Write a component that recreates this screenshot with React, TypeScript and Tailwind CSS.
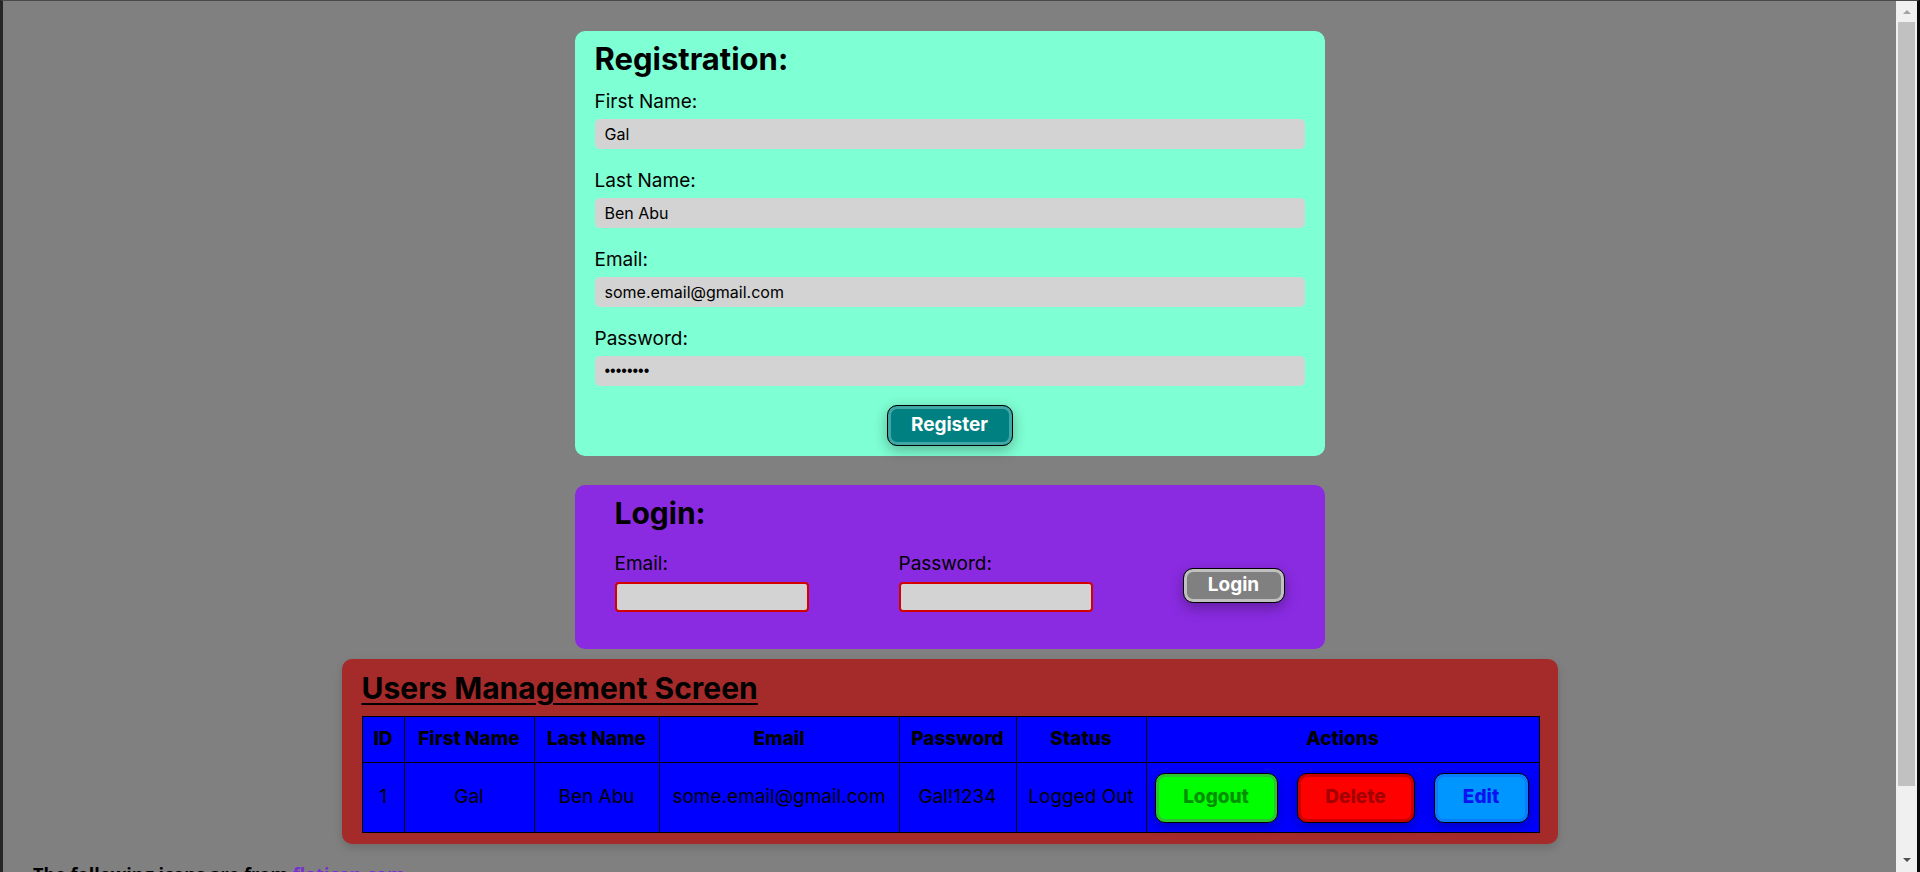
import { ChangeEvent, useState } from "react";

type User = {
  id: number;
  firstName: string;
  lastName: string;
  email: string;
  password: string;
  status: string;
};

const usersData: User[] = [
  {
    id: 1,
    firstName: "Gal",
    lastName: "Ben Abu",
    email: "some.email@gmail.com",
    password: "Gal!1234",
    status: "Logged Out",
  },
];

// column widths taken from the table in the screen
const columns = [
  { title: "ID", width: "w-[42px]" },
  { title: "First Name", width: "w-[130px]" },
  { title: "Last Name", width: "w-[125px]" },
  { title: "Email", width: "w-[240px]" },
  { title: "Password", width: "w-[117px]" },
  { title: "Status", width: "w-[130px]" },
  { title: "Actions", width: "w-[393px]" },
];

function Scrollbar() {
  return (
    <div className="flex w-[21px] shrink-0 flex-col bg-[#f0f0f0]">
      <div className="flex h-[21px] w-full items-center justify-center">
        <div className="h-0 w-0 border-x-[4px] border-b-[4px] border-x-transparent border-b-[#a3a3a3]" />
      </div>
      <div className="mx-[2px] h-[764px] bg-[#c1c1c1]" />
      <div className="flex-1" />
      <div className="flex h-[24px] w-full items-center justify-center">
        <div className="h-0 w-0 border-x-[4px] border-t-[4px] border-x-transparent border-t-[#505050]" />
      </div>
    </div>
  );
}

function App() {
  const [form, setForm] = useState({
    firstName: "Gal",
    lastName: "Ben Abu",
    email: "some.email@gmail.com",
    password: "Gal!1234",
  });
  const [loginEmail, setLoginEmail] = useState("");
  const [loginPassword, setLoginPassword] = useState("");

  const handdleChange = (e: ChangeEvent<HTMLInputElement>) => {
    setForm({ ...form, [e.target.name]: e.target.value });
  };

  const fields = [
    { name: "firstName", label: "First Name:", type: "text" },
    { name: "lastName", label: "Last Name:", type: "text" },
    { name: "email", label: "Email:", type: "text" },
    { name: "password", label: "Password:", type: "password" },
  ] as const;

  return (
    <div className="flex h-[872px] w-full overflow-hidden border-t border-l-[3px] border-r-[3px] border-t-[#4a4a4a] border-l-[#262626] border-r-[#0a0a0a] bg-[#808080]">
      <main className="flex flex-1 flex-col items-center pt-[30px] font-['Inter',sans-serif] text-black">
        {/* registration */}
        <div className="flex w-[750px] shrink-0 flex-col rounded-[10px] bg-[#7fffd4] px-[20px] pt-[10px] pb-[10px]">
          <h2 className="mb-[13px] text-[31px] leading-[36px] font-bold">Registration:</h2>
          {fields.map((field, i) => (
            <div key={field.name} className={i > 0 ? "mt-[20px] flex flex-col" : "flex flex-col"}>
              <label htmlFor={field.name} className="text-[19px] leading-[24px]">
                {field.label}
              </label>
              <input
                id={field.name}
                name={field.name}
                type={field.type}
                value={form[field.name]}
                onChange={handdleChange}
                className={
                  field.type === "password"
                    ? "mt-[5px] h-[30px] rounded-[5px] bg-[#d3d3d3] px-[10px] font-['Liberation_Sans',sans-serif] text-[16px] outline-none"
                    : "mt-[5px] h-[30px] rounded-[5px] bg-[#d3d3d3] px-[10px] text-[16px] outline-none"
                }
              />
            </div>
          ))}
          <button className="mt-[19px] h-[41px] w-[126px] self-center rounded-[10px] border border-black bg-[#008080] text-[19px] font-bold text-white shadow-[inset_0_0_0_3px_#40a6a6,0_4px_14px_rgba(0,0,0,0.3)]">
            Register
          </button>
        </div>

        {/* login */}
        <div className="mt-[29px] flex h-[164px] w-[750px] shrink-0 flex-col rounded-[10px] bg-[#8a2be2] px-[40px] pt-[10px]">
          <h2 className="text-[30px] leading-[36px] font-bold">Login:</h2>
          <div className="mt-[21px] flex items-center justify-between">
            <div className="flex flex-col">
              <label className="text-[19px] leading-[24px]">Email:</label>
              <input
                value={loginEmail}
                onChange={(e) => setLoginEmail(e.target.value)}
                className="mt-[6px] h-[30px] w-[194px] rounded-[4px] border-2 border-[#d40000] bg-[#d3d3d3] px-[6px] text-[16px] outline-none"
              />
            </div>
            <div className="flex flex-col">
              <label className="text-[19px] leading-[24px]">Password:</label>
              <input
                type="password"
                value={loginPassword}
                onChange={(e) => setLoginPassword(e.target.value)}
                className="mt-[6px] h-[30px] w-[194px] rounded-[4px] border-2 border-[#d40000] bg-[#d3d3d3] px-[6px] text-[16px] outline-none"
              />
            </div>
            <button className="mt-[6px] h-[35px] w-[102px] rounded-[10px] border border-black bg-[#808080] text-[19px] font-bold text-white shadow-[inset_0_0_0_3px_#c0c0c0,0_5px_14px_rgba(0,0,0,0.3)]">
              Login
            </button>
          </div>
        </div>

        {/* users management */}
        <div className="mt-[10px] flex w-[1216px] shrink-0 flex-col rounded-[10px] bg-[#a52a2a] px-[20px] pt-[11px] pb-[11px] shadow-[0_4px_10px_rgba(0,0,0,0.15)]">
          <h1 className="mb-[10px] text-[30px] leading-[36px] font-bold underline decoration-2 underline-offset-[4px]">
            Users Management Screen
          </h1>
          <table className="w-[1177px] table-fixed border-collapse border border-black bg-[#0000ff] text-[19px]">
            <thead>
              <tr>
                {columns.map((col) => (
                  <th key={col.title} className={`${col.width} h-[46px] border border-black font-extrabold`}>
                    {col.title}
                  </th>
                ))}
              </tr>
            </thead>
            <tbody>
              {usersData.map((user) => (
                <tr key={user.id}>
                  <td className="h-[70px] border border-black text-center">{user.id}</td>
                  <td className="border border-black text-center">{user.firstName}</td>
                  <td className="border border-black text-center">{user.lastName}</td>
                  <td className="border border-black text-center">{user.email}</td>
                  <td className="border border-black text-center">{user.password}</td>
                  <td className="border border-black text-center">{user.status}</td>
                  <td className="border border-black">
                    <div className="flex items-center gap-[19px] pl-[8px]">
                      <button className="h-[50px] w-[123px] rounded-[10px] border border-black bg-[#00ff00] text-[19px] font-extrabold text-[#009000] shadow-[inset_0_0_0_3px_#2ec42e,0_4px_12px_rgba(0,0,0,0.25)]">
                        Logout
                      </button>
                      <button className="h-[50px] w-[118px] rounded-[10px] border border-black bg-[#ff0000] text-[19px] font-extrabold text-[#a30000] shadow-[inset_0_0_0_3px_#c80000,0_4px_12px_rgba(0,0,0,0.25)]">
                        Delete
                      </button>
                      <button className="h-[50px] w-[95px] rounded-[10px] border border-black bg-[#0096ff] text-[19px] font-extrabold text-[#0a14f0] shadow-[inset_0_0_0_3px_#0a7cff,0_4px_12px_rgba(0,0,0,0.25)]">
                        Edit
                      </button>
                    </div>
                  </td>
                </tr>
              ))}
            </tbody>
          </table>
        </div>

        <p className="mt-[17px] shrink-0 self-stretch pl-[30px] font-['Open_Sans',sans-serif] text-[18px] font-bold">
          The following icons are from{" "}
          <a href="#" className="text-[#7a2fd0] underline">
            flaticon.com
          </a>
        </p>
      </main>
      <Scrollbar />
    </div>
  );
}

export default App;
